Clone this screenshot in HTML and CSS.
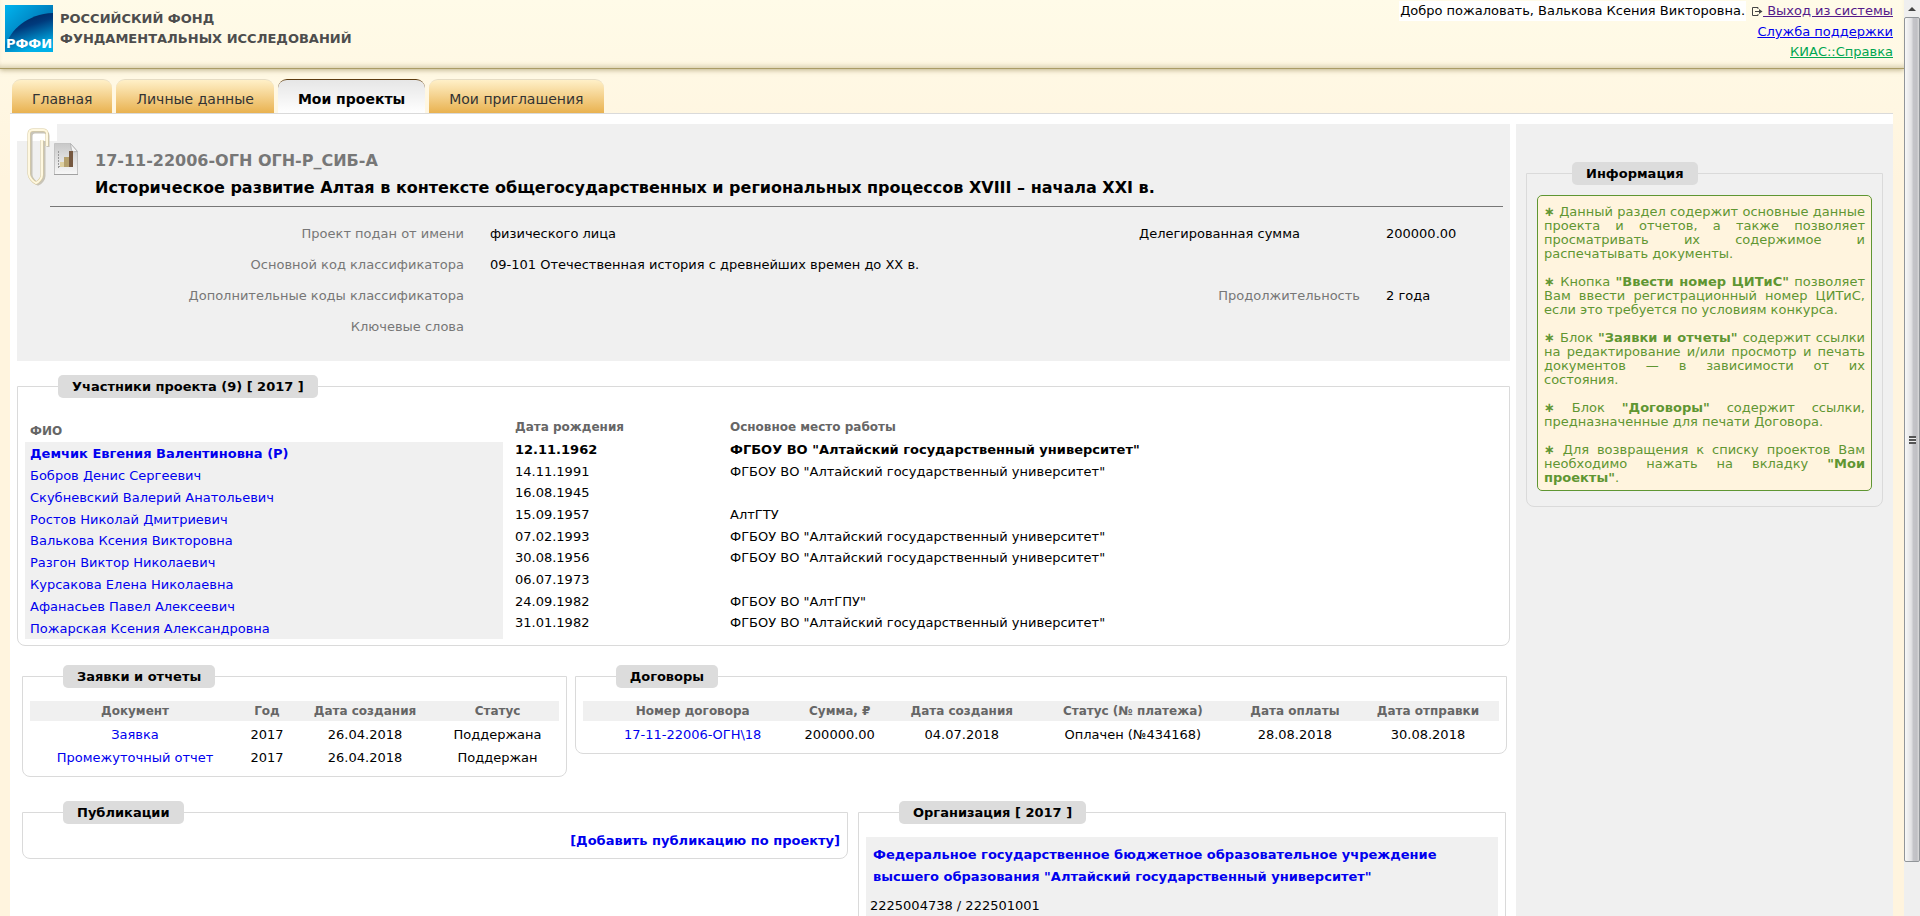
FILE: index.html
```html
<!DOCTYPE html>
<html lang="ru">
<head>
<meta charset="utf-8">
<title>КИАС РФФИ — Мои проекты</title>
<link rel="stylesheet" href="styles.css">
</head>
<body>
<div class="window">
  <div class="page">
    <header class="header">
      <div class="brand">
        <svg class="logo" viewBox="0 0 48 47" role="img" aria-label="РФФИ">
          <defs>
            <linearGradient id="sky" x1="0" y1="0" x2="1" y2="1"><stop offset="0" stop-color="#00b4ee"/><stop offset=".6" stop-color="#0079b8"/></linearGradient>
            <linearGradient id="sea" x1="0" y1="0" x2=".4" y2="1"><stop offset="0" stop-color="#001a50"/><stop offset=".45" stop-color="#003a7c"/><stop offset="1" stop-color="#00b0e8"/></linearGradient>
          </defs>
          <rect width="48" height="47" fill="url(#sky)"/>
          <path d="M0 42C5 25 22 9 48 8v39H0z" fill="url(#sea)"/>
          <text x="24" y="43" text-anchor="middle" class="logo-text">РФФИ</text>
        </svg>
        <div class="brand-name">РОССИЙСКИЙ ФОНД<br>ФУНДАМЕНТАЛЬНЫХ ИССЛЕДОВАНИЙ</div>
      </div>
      <div class="account">
        <div class="account-line account-first">
          <span class="welcome">Добро пожаловать, Валькова Ксения Викторовна.</span>
          <svg class="exit-icon" viewBox="0 0 12 11" aria-hidden="true"><path d="M7 3V1.500H1.500v8H7V8M4 5.500h5" fill="none" stroke="#444"/><path d="M8 3l3.500 2.500L8 8z" fill="#444"/></svg><a class="link-visited" href="#">&nbsp;Выход из системы</a>
        </div>
        <div class="account-line"><a class="link-plain" href="#">Служба поддержки</a></div>
        <div class="account-line"><a class="link-help" href="#">КИАС::Справка</a></div>
      </div>
    </header>

    <nav class="tabs">
      <a class="tab" href="#">Главная</a>
      <a class="tab" href="#">Личные данные</a>
      <a class="tab tab-active" href="#">Мои проекты</a>
      <a class="tab" href="#">Мои приглашения</a>
    </nav>

    <div class="content">
      <main class="main">
        <section class="project">
          <svg class="clip" viewBox="0 0 24 58" aria-hidden="true">
            <path d="M21 18V7q0-4-4-4H8Q4 3 4 7v39c0 3 4 8 7 9 3-1 6-5 6-8V12" transform="translate(1 1)" fill="none" stroke="#c8c4b8" stroke-width="3"/>
            <path d="M21 18V6q0-4-4-4H7Q3 2 3 6v40c0 3 4 8 7 9 3-1 6-5 6-8V12" fill="none" stroke="#d8ca9c" stroke-width="3"/>
            <path d="M21 18V6q0-4-4-4H7Q3 2 3 6v40c0 3 4 8 7 9 3-1 6-5 6-8V12" fill="none" stroke="#fff8e0" stroke-width="2"/>
          </svg>
          <svg class="doc" viewBox="0 0 24 33" aria-hidden="true">
            <defs><linearGradient id="paper" x1="0" y1="0" x2="0" y2="1"><stop offset="0" stop-color="#c8c8c8"/><stop offset="1" stop-color="#f8f8f8"/></linearGradient></defs>
            <path d="M.5.500h16l7 8v23H.500z" fill="url(#paper)" stroke="#c4c4c4"/>
            <path d="M0 31.500h24" stroke="#a2a2a2"/>
            <path d="M16.500.500l7 8q-5 1-6-1z" fill="#f4f4f4" stroke="#b4b4b4"/>
            <path d="M4.500 8v17M4 23.500h15" stroke="#999" stroke-dasharray="2 1"/>
            <path d="M6 19h4v5H6z" fill="#ded0a0"/><path d="M10 14h5v10h-5z" fill="#b5a06c"/><path d="M15 8h4v16h-4z" fill="#765840"/>
          </svg>
          <div class="project-head">
            <div class="project-code">17-11-22006-ОГН ОГН-Р_СИБ-А</div>
            <h1 class="project-title">Историческое развитие Алтая в контексте общегосударственных и региональных процессов XVIII – начала XXI в.</h1>
          </div>
          <div class="fields">
            <span class="field-label">Проект подан от имени</span><span>физического лица</span><span class="field-sum">Делегированная сумма</span><span>200000.00</span>
            <span class="field-label">Основной код классификатора</span><span class="field-wide">09-101 Отечественная история с древнейших времен до XX в.</span>
            <span class="field-label">Дополнительные коды классификатора</span><span></span><span class="field-label">Продолжительность</span><span>2 года</span>
            <span class="field-label">Ключевые слова</span><span class="field-wide"></span>
          </div>
        </section>

        <fieldset class="box members">
          <legend>Участники проекта (9) [ 2017 ]</legend>
          <div class="member-columns">
            <table class="names">
              <thead><tr><th>ФИО</th></tr></thead>
              <tbody>
                <tr class="lead"><td><a href="#">Демчик Евгения Валентиновна (Р)</a></td></tr>
                <tr><td><a href="#">Бобров Денис Сергеевич</a></td></tr>
                <tr><td><a href="#">Скубневский Валерий Анатольевич</a></td></tr>
                <tr><td><a href="#">Ростов Николай Дмитриевич</a></td></tr>
                <tr><td><a href="#">Валькова Ксения Викторовна</a></td></tr>
                <tr><td><a href="#">Разгон Виктор Николаевич</a></td></tr>
                <tr><td><a href="#">Курсакова Елена Николаевна</a></td></tr>
                <tr><td><a href="#">Афанасьев Павел Алексеевич</a></td></tr>
                <tr><td><a href="#">Пожарская Ксения Александровна</a></td></tr>
              </tbody>
            </table>
            <table class="details">
              <thead><tr><th class="col-birth">Дата рождения</th><th>Основное место работы</th></tr></thead>
              <tbody>
                <tr class="lead"><td>12.11.1962</td><td>ФГБОУ ВО "Алтайский государственный университет"</td></tr>
                <tr><td>14.11.1991</td><td>ФГБОУ ВО "Алтайский государственный университет"</td></tr>
                <tr><td>16.08.1945</td><td></td></tr>
                <tr><td>15.09.1957</td><td>АлтГТУ</td></tr>
                <tr><td>07.02.1993</td><td>ФГБОУ ВО "Алтайский государственный университет"</td></tr>
                <tr><td>30.08.1956</td><td>ФГБОУ ВО "Алтайский государственный университет"</td></tr>
                <tr><td>06.07.1973</td><td></td></tr>
                <tr><td>24.09.1982</td><td>ФГБОУ ВО "АлтГПУ"</td></tr>
                <tr><td>31.01.1982</td><td>ФГБОУ ВО "Алтайский государственный университет"</td></tr>
              </tbody>
            </table>
          </div>
        </fieldset>

        <div class="row row-docs">
          <fieldset class="box docs">
            <legend>Заявки и отчеты</legend>
            <table class="grid">
              <colgroup><col class="w-document"><col class="w-year"><col class="w-date"><col class="w-state"></colgroup>
              <thead><tr><th>Документ</th><th>Год</th><th>Дата создания</th><th>Статус</th></tr></thead>
              <tbody>
                <tr><td><a href="#">Заявка</a></td><td>2017</td><td>26.04.2018</td><td>Поддержана</td></tr>
                <tr><td><a href="#">Промежуточный отчет</a></td><td>2017</td><td>26.04.2018</td><td>Поддержан</td></tr>
              </tbody>
            </table>
          </fieldset>
          <fieldset class="box contracts">
            <legend>Договоры</legend>
            <table class="grid">
              <colgroup><col class="w-number"><col class="w-sum"><col class="w-date"><col class="w-payment"><col class="w-paid"><col class="w-date"></colgroup>
              <thead><tr><th>Номер договора</th><th>Сумма, ₽</th><th>Дата создания</th><th>Статус (№ платежа)</th><th>Дата оплаты</th><th>Дата отправки</th></tr></thead>
              <tbody>
                <tr><td><a href="#">17-11-22006-ОГН\18</a></td><td>200000.00</td><td>04.07.2018</td><td>Оплачен (№434168)</td><td>28.08.2018</td><td>30.08.2018</td></tr>
              </tbody>
            </table>
          </fieldset>
        </div>

        <div class="row row-bottom">
          <fieldset class="box publications">
            <legend>Публикации</legend>
            <a class="add" href="#">[Добавить публикацию по проекту]</a>
          </fieldset>
          <fieldset class="box organization">
            <legend>Организация [ 2017 ]</legend>
            <div class="org-body">
              <a class="org-name" href="#">Федеральное государственное бюджетное образовательное учреждение высшего образования "Алтайский государственный университет"</a>
              <div class="org-codes">2225004738 / 222501001</div>
            </div>
          </fieldset>
        </div>
      </main>

      <aside class="side">
        <fieldset class="box info">
          <legend>Информация</legend>
          <div class="note">
            <p><b>∗</b> Данный раздел содержит основные данные проекта и отчетов, а также позволяет просматривать их содержимое и распечатывать документы.</p>
            <p><b>∗</b> Кнопка <b>"Ввести номер ЦИТиС"</b> позволяет Вам ввести регистрационный номер ЦИТиС, если это требуется по условиям конкурса.</p>
            <p><b>∗</b> Блок <b>"Заявки и отчеты"</b> содержит ссылки на редактирование и/или просмотр и печать документов — в зависимости от их состояния.</p>
            <p><b>∗</b> Блок <b>"Договоры"</b> содержит ссылки, предназначенные для печати Договора.</p>
            <p><b>∗</b> Для возвращения к списку проектов Вам необходимо нажать на вкладку <b>"Мои проекты"</b>.</p>
          </div>
        </fieldset>
      </aside>
    </div>
  </div>

  <div class="scrollbar" aria-hidden="true">
    <div class="scroll-up"></div>
    <div class="scroll-thumb"><span class="grip"></span></div>
    <div class="scroll-rest"></div>
  </div>
</div>
</body>
</html>
```

FILE: styles.css
```css
* { box-sizing: border-box; }
body {
  margin: 0;
  font-family: Verdana, "DejaVu Sans", sans-serif;
  font-size: 13px;
  line-height: 15px;
  color: #000;
}
a { color: #0000ee; text-decoration: none; }

.window { display: flex; height: 100vh; overflow: hidden; }
.page {
  flex: 1;
  min-width: 0;
  display: flex;
  flex-direction: column;
  overflow: hidden;
  background: #fff4de linear-gradient(#fffbe8, #fff4de 180px) no-repeat;
}

/* Header */
.header {
  flex: none;
  display: flex;
  justify-content: space-between;
  height: 69px;
  padding: 0 11px 0 5px;
  border-bottom: 1px solid #aa9c66;
  box-shadow: 0 1px 5px rgba(140, 125, 70, .6), inset 0 -5px 5px -3px rgba(140, 125, 70, .35);
}
.brand { display: flex; gap: 7px; padding-top: 5px; }
.logo { width: 48px; height: 47px; }
.logo-text { font: bold 13px "DejaVu Sans", sans-serif; fill: #fff; }
.brand-name { padding-top: 4px; line-height: 20px; font-weight: bold; color: #4d4d4d; }
.account { padding-top: 1px; text-align: right; }
.account-line { line-height: 20px; }
.account-first { display: flex; align-items: center; justify-content: flex-end; margin-bottom: 1px; }
.welcome { background: #fff; margin-right: 5px; padding: 0 1px; }
.exit-icon { width: 12px; height: 11px; }
.account a { text-decoration: underline; }
.account .link-visited { color: #551a8b; }
.account .link-help { color: #00a651; }

/* Tabs */
.tabs { flex: none; display: flex; gap: 4px; padding: 10px 12px 0; }
.tab {
  padding: 12px 20px 6px;
  border-top: 1px solid #e6dcc4;
  border-radius: 9px 9px 0 0;
  font-size: 14px;
  line-height: 15px;
  color: #333;
  background: linear-gradient(#fff0c8, #e9b250);
}
.tab-active {
  border-top: 1px solid #5e3c10;
  font-weight: bold;
  color: #000;
  background: linear-gradient(#e6e6e6, #fff);
}

/* Content */
.content {
  flex: 1;
  min-height: 0;
  display: grid;
  grid-template-columns: minmax(0, 1fr) 377px;
  gap: 6px;
  margin: 0 11px 0 10px;
  padding: 10px 0 0 7px;
  border-top: 1px solid #dadada;
  background: #fff;
}
.project {
  position: relative;
  padding: 26px 7px 19px 33px;
  background: linear-gradient(#fff, #fff) 0 0 / 40px 17px no-repeat #f0f0f0;
}
.clip { position: absolute; left: 9px; top: 4px; width: 24px; height: 58px; }
.doc { position: absolute; left: 37px; top: 19px; width: 24px; height: 33px; }
.project-head { padding: 0 0 8px 45px; border-bottom: 1px solid #777; font-size: 16px; font-weight: bold; }
.project-code { line-height: 21px; color: #777; }
.project-title { margin: 7px 0 0; line-height: 20px; font-size: 16px; }
.fields {
  display: grid;
  grid-template-columns: 414px 1fr 221px 117px;
  column-gap: 26px;
  padding-top: 11px;
  line-height: 31px;
}
.field-label { text-align: right; color: #777; }
.field-wide { grid-column: span 3; }

/* Framed boxes */
.box {
  min-width: 0;
  margin: 0;
  padding: 0;
  border: 1px solid #dadada;
  border-radius: 0 0 8px 8px;
}
.box legend {
  margin-left: 33px;
  padding: 4px 14px;
  border-radius: 5px;
  background: #dcdcdc;
  font-weight: bold;
}

.members { margin-top: 14px; padding: 0 7px 6px; }
.member-columns { display: flex; gap: 12px; align-items: flex-start; }
.member-columns table { border-collapse: collapse; text-align: left; }
.member-columns th { height: 22px; padding: 0; font-size: 12px; color: #666; }
.member-columns td { height: 22px; padding: 0; }
.member-columns .lead { font-weight: bold; }
.names { width: 478px; margin-top: 22px; }
.names th, .names tbody td { padding-left: 5px; }
.names tbody { background: #f0f0f0; }
.names tbody tr:nth-child(5n) td { height: 21px; }
.details { flex: 1; margin-top: 18px; }
.details .col-birth { width: 215px; }
.details tbody tr:nth-child(3n) td { height: 21px; }

.row { display: grid; gap: 8px; align-items: start; }
.row-docs { grid-template-columns: 545fr 933fr; margin-top: 19px; padding: 0 3px 0 5px; }
.row-bottom { grid-template-columns: 826fr 648fr; gap: 10px; margin-top: 24px; padding: 0 4px 0 5px; }
.docs, .contracts { padding: 13px 7px 9px; }
.grid { width: 100%; table-layout: fixed; border-collapse: collapse; text-align: center; }
.grid th { height: 20px; padding: 0; background: #f0f0f0; font-size: 12px; color: #666; }
.grid td { height: 23px; padding: 3px 0 0; }
.contracts .grid th:first-child, .contracts .grid td:first-child { padding-left: 14px; }
.w-document { width: 210px; }
.w-year { width: 54px; }
.w-date { width: 142px; }
.w-state { width: 123px; }
.w-number { width: 206px; }
.w-sum { width: 102px; }
.w-payment { width: 200px; }
.w-paid { width: 124px; }

.publications { padding: 8px 7px; }
.add { display: block; font-weight: bold; line-height: 18px; text-align: right; }
.organization { padding: 13px 7px; }
.org-body { padding: 7px 4px 20px; background: #f0f0f0; line-height: 22px; }
.org-name { display: block; padding: 0 3px; font-weight: bold; }
.org-codes { padding-top: 7px; }

/* Side panel */
.side { padding: 38px 10px 0 10px; background: #f0f0f0; }
.info { padding: 10px 10px 15px; }
.info legend { margin-left: 35px; }
.note {
  padding: 9px 6px 5px;
  border: 1px solid #5f9632;
  border-radius: 5px;
  background: #fff4de;
  color: #5f9632;
  line-height: 14px;
  text-align: justify;
}
.note p { margin: 0 0 14px; }
.note p:last-child { margin: 0; }

/* Window scrollbar */
.scrollbar { flex: none; width: 16px; display: flex; flex-direction: column; background: #efefef; }
.scroll-up { height: 17px; display: flex; align-items: center; justify-content: center; }
.scroll-up::before {
  content: "";
  border: 4px solid transparent;
  border-top: 0;
  border-bottom: 4px solid #444;
}
.scroll-thumb {
  flex: 845;
  display: flex;
  align-items: center;
  justify-content: center;
  border: 1px solid #919599;
  border-radius: 2px;
  background: linear-gradient(90deg, #f8f8f8, #e2e2e4 45%, #c4c4c8 60%, #c0c0c4 85%, #dcdcdc);
}
.grip { width: 7px; height: 8px; background: repeating-linear-gradient(#555 0 2px, #eee 2px 3px); }
.scroll-rest { flex: 54; }
```
